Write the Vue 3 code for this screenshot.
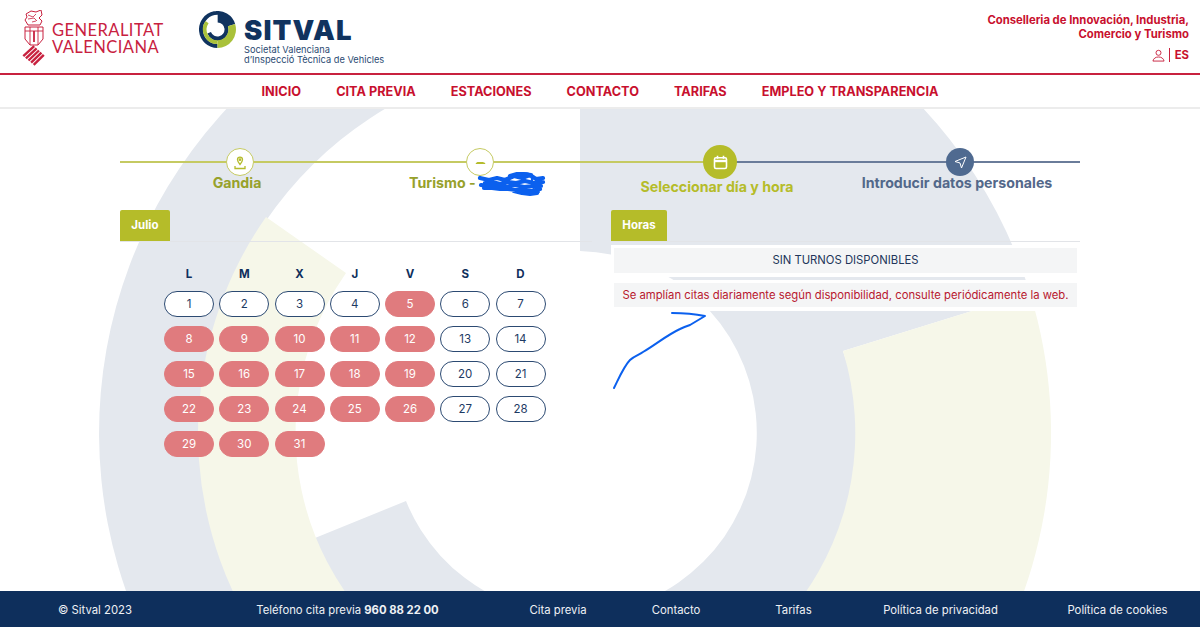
<template>
  <div class="page">
    <header class="top">
      <div class="brands">
        <div class="gva">
          <svg class="gva-mark" width="24" height="57" viewBox="0 0 24 57" fill="none" stroke="#c8213f">
            <path d="M4 4L9 1l5 1 5-2 1 5-3 3 3 3-2 4H6l-3-5 2-3z" stroke-width="1" />
            <path d="M6 5l5 2 3-3M6 9l6-1 3 3M10 12l4-1" stroke-width=".8" />
            <path d="M3 17h18v12l-5 6H8l-5-6z" stroke-width="1" />
            <path d="M3 21h18M8 17v18M16 17v18" stroke-width=".9" />
            <path d="M12 21v11" stroke-width="1.800" />
            <g stroke-width="2.400">
              <path d="M1.300 46.100L12.200 36.100M3.900 48.300L14.600 38.300M6.500 50.500L17 40.500M9.100 52.700L19.400 42.700M11.700 54.900L21.800 44.900" />
            </g>
          </svg>
          <div class="gva-name">GENERALITAT<br />VALENCIANA</div>
        </div>
        <div class="sitval">
          <svg class="sitval-mark" width="37" height="37" viewBox="99 -43 953 953">
            <path :d="ringA" fill="#10335f" />
            <path :d="ringB" fill="#a9c13a" />
            <path :d="ringC" fill="#a9c13a" />
          </svg>
          <div class="sitval-text">
            <div class="sitval-name">SITVAL</div>
            <div class="sitval-sub">Societat Valenciana<br />d’Inspecció Tècnica de Vehicles</div>
          </div>
        </div>
      </div>
      <div class="dept">
        <p class="dept-name">Conselleria de Innovación, Industria,<br />Comercio y Turismo</p>
        <div class="dept-tools">
          <svg width="13" height="13" viewBox="0 0 14 13" fill="none" stroke="#c8213f" stroke-width="1">
            <circle cx="7" cy="3.600" r="2.700" />
            <path d="M1 12.500c.6-3 3-4.400 6-4.400s5.400 1.400 6 4.400z" />
          </svg>
          <span class="dept-sep"></span>
          <span class="dept-lang">ES</span>
        </div>
      </div>
    </header>

    <nav class="menu">
      <a v-for="item in menu" :key="item">{{ item }}</a>
    </nav>

    <main class="content">
      <svg class="watermark" width="1200" height="483" viewBox="0 108 1200 483">
        <path :d="ringA" fill="#e4e8ee" />
        <path :d="ringB" fill="#f6f7e9" />
        <path :d="ringC" fill="#f6f7e9" />
      </svg>

      <div class="steps">
        <div class="step done">
          <span class="dot">
            <svg width="14" height="15" viewBox="0 0 14 15" fill="none" stroke="#b4bb2c" stroke-width="1.300">
              <path d="M7 9.500C5.500 7.500 4.500 6.200 4.500 4.700a2.500 2.500 0 0 1 5 0C9.500 6.200 8.500 7.500 7 9.500z" />
              <circle cx="7" cy="4.700" r=".7" />
              <path d="M2 11v2.500h10V11" />
            </svg>
          </span>
          <span class="label">Gandia</span>
        </div>
        <div class="step done">
          <span class="dot">
            <svg width="11" height="5" viewBox="0 0 14 6"><path d="M1 4l2-1.500h7L13 3.500V5H1z" fill="#b4bb2c" /></svg>
          </span>
          <span class="label">Turismo - <span class="hidden-name"></span></span>
        </div>
        <div class="step current">
          <span class="dot">
            <svg width="15" height="15" viewBox="0 0 15 15" fill="none" stroke="#fff" stroke-width="1.600">
              <rect x="1.500" y="2.800" width="12" height="10.700" rx="1.500" />
              <path d="M1.500 6h12" stroke-width="2.400" />
              <path d="M4.500 .8v3M10.500 .8v3" />
            </svg>
          </span>
          <span class="label">Seleccionar día y hora</span>
        </div>
        <div class="step todo">
          <span class="dot">
            <svg width="13" height="13" viewBox="0 0 13 13" fill="none" stroke="#fff" stroke-width="1" stroke-linejoin="round">
              <path d="M12 1L1 5.500l5 1.500 1.500 5z" />
            </svg>
          </span>
          <span class="label">Introducir datos personales</span>
        </div>
      </div>

      <div class="panels">
        <section class="panel">
          <div class="tabs"><span class="tab">Julio</span></div>
          <div class="calendar">
            <div v-for="d in weekdays" :key="d" class="weekday">{{ d }}</div>
            <div v-for="n in 31" :key="n" class="day" :class="{ full: isFull(n) }">{{ n }}</div>
          </div>
        </section>
        <section class="panel">
          <div class="tabs"><span class="tab">Horas</span></div>
          <div class="notice"><p class="notice-row">SIN TURNOS DISPONIBLES</p></div>
          <div class="notice"><p class="notice-row warn">Se amplían citas diariamente según disponibilidad, consulte periódicamente la web.</p></div>
        </section>
      </div>

      <!-- pen marks made on the screenshot -->
      <svg class="pen" width="1200" height="483" viewBox="0 108 1200 483" fill="none" stroke="#0b60ee" stroke-linecap="round" stroke-linejoin="round">
        <path d="M614 388c5-10 10-22 16-28 4-4 9-5 13-8 12-7 24-17 37-23 4-2 7-3 10-4 5-3 10-6 15-9-10-2-22-3-33-3" stroke-width="2" />
        <path d="M480 178l9 2 8-2 8 2 9-4 8 2 8-3 6 4 7-1M543 182l-9 1-9-2-9 2-8-1-8 2-8-2-7 1M481 185l8 1 9-1 9 2 8-2 9 2 9-1 8 0M484 188l8 0 8 1 8 0 8 1 8 0 8 1 8-2M510 176l7-2 7 0 7 1M514 191l8 2 8 1 7-1"
          stroke-width="4.200" />
        <path d="M522 174c6-2 10 0 10 6 0 6 2 12 7 12" stroke-width="2" />
      </svg>
    </main>

    <footer class="foot">
      <span>© Sitval 2023</span>
      <span>Teléfono cita previa <b>960 88 22 00</b></span>
      <a v-for="link in footerLinks" :key="link">{{ link }}</a>
    </footer>
  </div>
</template>

<script setup>
const menu = ['INICIO', 'CITA PREVIA', 'ESTACIONES', 'CONTACTO', 'TARIFAS', 'EMPLEO Y TRANSPARENCIA']
const footerLinks = ['Cita previa', 'Contacto', 'Tarifas', 'Política de privacidad', 'Política de cookies']
const weekdays = ['L', 'M', 'X', 'J', 'V', 'S', 'D']

// same ring shape for the logo and the page watermark
const ringA = 'M575 909A476 476 0 1 1 1030 293L843 351A280 280 0 0 1 315 538L406 501A182 182 0 1 0 580 251L580 56A377 377 0 1 0 575 810Z'
const ringB = 'M1030 293A476 476 0 0 1 575 909L575 713A280 280 0 0 0 843 351Z'
const ringC = 'M266 217A377 377 0 0 0 575 810L575 712A279 279 0 0 1 346 273Z'

const openDays = [1, 2, 3, 4, 6, 7, 13, 14, 20, 21, 27, 28]
const isFull = n => !openDays.includes(n)
</script>

<style>
html, body { margin: 0; background: #fff; }
</style>

<style scoped>
.page { width: 1200px; height: 627px; display: flex; flex-direction: column; overflow: hidden; font-family: Inter, "Noto Sans", sans-serif; color: #0f2f5c; }

.top { height: 75px; box-sizing: border-box; border-bottom: 2px solid #c8213f; display: flex; justify-content: space-between; padding: 8px 11px 0 22px; flex: none; }
.brands { display: flex; gap: 35px; }
.gva { display: flex; gap: 6px; width: 142px; flex: none; }
.gva-mark { margin-top: 2px; flex: none; }
.gva-name { font-family: Lato, "Open Sans", sans-serif; font-size: 16.500px; line-height: 17px; color: #c8213f; margin-top: 14px; letter-spacing: .45px; white-space: nowrap; }
.sitval { display: flex; gap: 8px; margin-top: 3px; }
.sitval-mark { flex: none; }
.sitval-name { font-size: 27.500px; font-weight: 900; line-height: 32px; letter-spacing: 1.100px; color: #10335f; margin-top: 3px; }
.sitval-sub { font-size: 9.250px; line-height: 9.500px; margin-top: -1px; color: #2a4a72; white-space: nowrap; }

.dept { text-align: right; }
.dept-name { margin: 6px 0 0; font-size: 11.300px; line-height: 13.500px; font-weight: 700; color: #c8102e; }
.dept-tools { display: flex; justify-content: flex-end; align-items: center; gap: 4px; margin-top: 7px; }
.dept-sep { width: 1px; height: 14px; background: #c8213f; margin-right: 1px; }
.dept-lang { font-size: 11.300px; font-weight: 700; color: #c8102e; }

.menu { height: 34px; flex: none; box-sizing: border-box; border-bottom: 2px solid #ececec; display: flex; justify-content: center; align-items: center; gap: 35.100px; font-size: 12.700px; font-weight: 700; color: #c8102e; }

.content { position: relative; flex: 1; padding: 39px 120px 0; overflow: hidden; }
.watermark { position: absolute; left: 0; top: -1px; }
.pen { position: absolute; left: 0; top: -1px; pointer-events: none; }

.steps { position: relative; display: grid; grid-template-columns: repeat(4, 1fr); background: linear-gradient(to right, #c5ca62 61.500%, #6a7c9a 61.500%) no-repeat 0 13px / 100% 2px; }
.step { display: flex; flex-direction: column; align-items: center; height: 62px; }
.dot { width: 28px; height: 28px; box-sizing: border-box; border-radius: 50%; display: flex; align-items: center; justify-content: center; flex: none; }
.done .dot { background: #fff; border: 1px solid #c5ca62; }
.current .dot { width: 34px; height: 34px; margin-top: -3px; background: #b5bc29; }
.todo .dot { background: #4f6a90; }
.label { font-size: 14.200px; font-weight: 700; line-height: 18px; margin-top: -2px; padding-right: 6px; white-space: nowrap; position: relative; }
.done .label { color: #97a12b; }
.current .label { color: #b5bc29; margin-top: -1px; }
.todo .label { color: #53688a; }
.hidden-name { display: inline-block; width: 66px; }

.panels { position: relative; display: grid; grid-template-columns: 472px 469px; column-gap: 19px; }
.tabs { height: 32px; box-sizing: border-box; border-bottom: 1px solid #e2e4e8; }
.tab { display: inline-block; height: 31px; line-height: 31px; padding: 0 11.300px; background: #b5bc29; color: #fff; font-size: 11.500px; font-weight: 700; border-radius: 2px 2px 0 0; }

.calendar { display: grid; grid-template-columns: repeat(7, 50px); column-gap: 5.250px; row-gap: 9px; padding: 24px 0 0 44px; }
.weekday { height: 16px; text-align: center; font-size: 11.500px; font-weight: 700; line-height: 16px; color: #0f2f5c; }
.day { height: 26px; box-sizing: border-box; border: 1px solid #2c4a72; border-radius: 13px; background: #fff; text-align: center; font-size: 11.500px; line-height: 24px; color: #1d3a63; }
.day.full { background: #e07b7e; border-color: #e07b7e; color: #fff; }

.notice { margin-top: 3px; padding: 3px 3px 4px; background: #fff; }
.notice-row { margin: 0; height: 24.500px; background: #f4f5f6; text-align: center; font-size: 11.300px; line-height: 24.500px; color: #22365a; white-space: nowrap; }
.notice-row.warn { color: #b8182f; }

.foot { flex: none; height: 36px; box-sizing: border-box; padding-top: 1px; background: #0e2f5c; color: #eef1f5; display: grid; grid-template-columns: 190px 315px 106px 130px 105px 189px 165px; align-items: center; justify-items: center; font-size: 11.300px; }
.foot b { font-weight: 700; }
</style>
